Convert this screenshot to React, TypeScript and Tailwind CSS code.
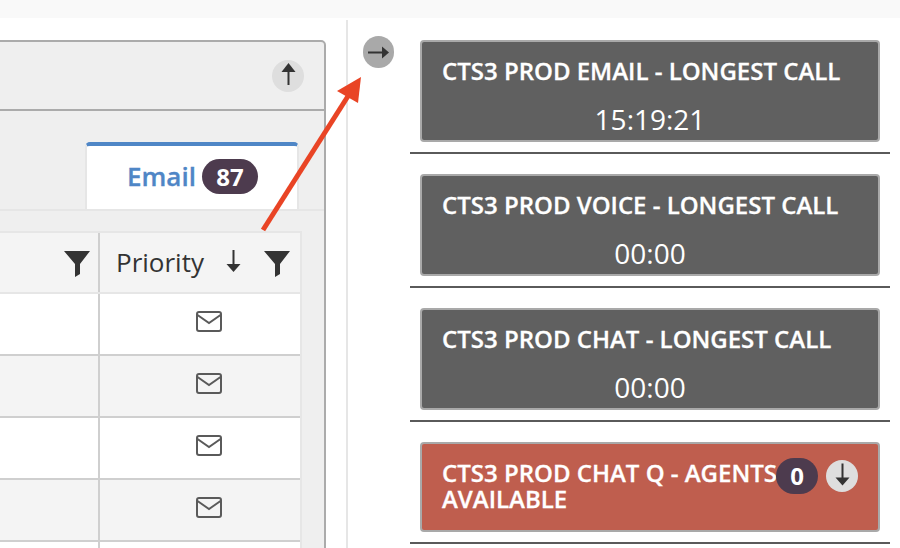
const font = "font-['Open_Sans',sans-serif]";

function ArrowUp() {
  return (
    <svg width="15" height="22" viewBox="0 0 15 22">
      <rect x="6.5" y="5" width="2" height="17" fill="#333" />
      <path d="M7.5 0 L14.5 9 H0.5 Z" fill="#333" />
    </svg>
  );
}

function ArrowDown({ w = 15, h = 23 }: { w?: number; h?: number }) {
  return (
    <svg width={w} height={h} viewBox="0 0 15 22">
      <rect x="6.5" y="0" width="2" height="17" fill="#333" />
      <path d="M7.5 22 L14.5 14 H0.5 Z" fill="#333" />
    </svg>
  );
}

function ArrowRight() {
  return (
    <svg width="21" height="13" viewBox="0 0 21 13">
      <rect x="0" y="5.5" width="16" height="2" fill="#333" />
      <path d="M21 6.5 L14 0.5 V12.5 Z" fill="#333" />
    </svg>
  );
}

function Funnel() {
  return (
    <svg width="26" height="27" viewBox="0 0 26 27">
      <path d="M0 1 H26 L16 14 V24 L11 27 V14 Z" fill="#333" />
    </svg>
  );
}

function Envelope() {
  return (
    <svg width="26" height="21" viewBox="0 0 26 21" fill="none" stroke="#5a5a5a" strokeWidth="2">
      <rect x="1" y="1" width="24" height="19" rx="2" />
      <path d="M1.5 4 L13 12 L24.5 4" />
    </svg>
  );
}

function Row({ shaded }: { shaded: boolean }) {
  return (
    <div className={`flex h-[62px] border-b-2 border-[#cfcfcf] ${shaded ? "bg-[#f4f4f4]" : "bg-white"}`}>
      <div className="w-[118px] border-r-2 border-[#cfcfcf]" />
      <div className="flex-1 flex justify-center pt-[17px] pl-[17px]">
        <Envelope />
      </div>
    </div>
  );
}

function Card({ title, value }: { title: string; value: string }) {
  return (
    <div className="border-b-2 border-[#5a5a5a] px-[10px] pb-[10px] mb-[20px]">
      <div className="h-[102px] rounded-[4px] border-2 border-[#a9a9a9] bg-[#606060] text-white">
        <div className="pl-[20px] pt-[13px] text-[24px] leading-[32px] font-semibold whitespace-nowrap [-webkit-text-stroke:0.3px]">{title}</div>
        <div className="mt-[15px] text-center text-[28px] leading-[34px]">{value}</div>
      </div>
    </div>
  );
}

export default function App() {
  return (
    <div className={`relative h-[548px] w-[900px] overflow-hidden bg-white ${font}`}>
      <div className="h-[18px] bg-[#f9f9f9]" />
      <div className="flex h-[530px]">
        {/* Left pane */}
        <div className="mt-[2px] w-[348px] border-r-2 border-[#e6e6e6] pt-[20px]">
          <div className="ml-[-20px] w-[346px] h-[520px] rounded-tr-[5px] border-2 border-[#ababab] bg-[#efefef]">
            <div className="flex h-[69px] items-center justify-end border-b-2 border-[#ababab] pr-[20px]">
              <div className="flex h-[32px] w-[32px] items-center justify-center rounded-full bg-[#dedede] pb-[3px]">
                <ArrowUp />
              </div>
            </div>
            <div className="flex justify-end pt-[31px] pr-[25px]">
              <div className="flex h-[67px] w-[214px] items-start justify-center gap-[6px] rounded-t-[5px] border-x-2 border-[#e6e6e6] border-t-4 border-t-[#4f86c6] bg-white pt-[13px]">
                <span className="ml-[1px] text-[26px] leading-[34px] font-semibold text-[#4f86c6] [-webkit-text-stroke:0.3px]">Email</span>
                <span className="flex h-[35px] w-[56px] items-center justify-center rounded-full bg-[#4d3b4e] text-[24px] font-bold text-white">87</span>
              </div>
            </div>
            <div className="border-t-2 border-[#e6e6e6] pt-[20px] pr-[22px]">
              <div className="border-t-2 border-r-2 border-[#e6e6e6]">
                <div className="flex h-[61px] border-b-2 border-[#e6e6e6] bg-[#f4f4f4]">
                  <div className="flex w-[118px] items-center justify-end border-r-2 border-[#cfcfcf] pr-[8px] pt-[2px]">
                    <Funnel />
                  </div>
                  <div className="flex flex-1 items-center pl-[16px]">
                    <span className="mb-[2px] text-[26px] leading-[34px] text-[#333]">Priority</span>
                    <span className="ml-[22px] mb-[4px]"><ArrowDown w={15} h={22} /></span>
                    <span className="ml-[23px] mt-[2px]"><Funnel /></span>
                  </div>
                </div>
                <Row shaded={false} />
                <Row shaded />
                <Row shaded={false} />
                <Row shaded />
                <Row shaded={false} />
              </div>
            </div>
          </div>
        </div>

        {/* Right pane */}
        <div className="flex flex-1 pl-[15px] pt-[22px]">
          <div className="mr-[16px] mt-[-4px] flex h-[32px] w-[31px] items-center justify-center rounded-full bg-[#a9a9a9]">
            <ArrowRight />
          </div>
          <div className="w-[480px]">
            <Card title="CTS3 PROD EMAIL - LONGEST CALL" value="15:19:21" />
            <Card title="CTS3 PROD VOICE - LONGEST CALL" value="00:00" />
            <Card title="CTS3 PROD CHAT - LONGEST CALL" value="00:00" />
            <div className="border-b-2 border-[#5a5a5a] px-[10px] pb-[10px]">
              <div className="relative h-[90px] rounded-[4px] border-2 border-[#a9a9a9] bg-[#bf5e4e] pl-[20px] pt-[16px] text-[24px] leading-[26px] font-semibold text-white">
                <div className="[-webkit-text-stroke:0.3px]">CTS3 PROD CHAT Q - AGENTS</div>
                <div className="[-webkit-text-stroke:0.3px]">AVAILABLE</div>
                <span className="absolute left-[354px] top-[14px] flex h-[36px] w-[42px] items-center justify-center rounded-full bg-[#4d3b4e] text-[24px] font-bold">0</span>
                <span className="absolute left-[404px] top-[16px] flex h-[32px] w-[32px] items-center justify-center rounded-full bg-[#dedede] pb-[3px]">
                  <ArrowDown />
                </span>
              </div>
            </div>
          </div>
        </div>
      </div>

      {/* Annotation arrow */}
      <svg className="absolute left-0 top-0" width="900" height="548" fill="none">
        <path d="M263 230 L350 93" stroke="#e94425" strokeWidth="5" />
        <path d="M361 77 L337 91 L358 103 Z" fill="#e94425" />
      </svg>
    </div>
  );
}
